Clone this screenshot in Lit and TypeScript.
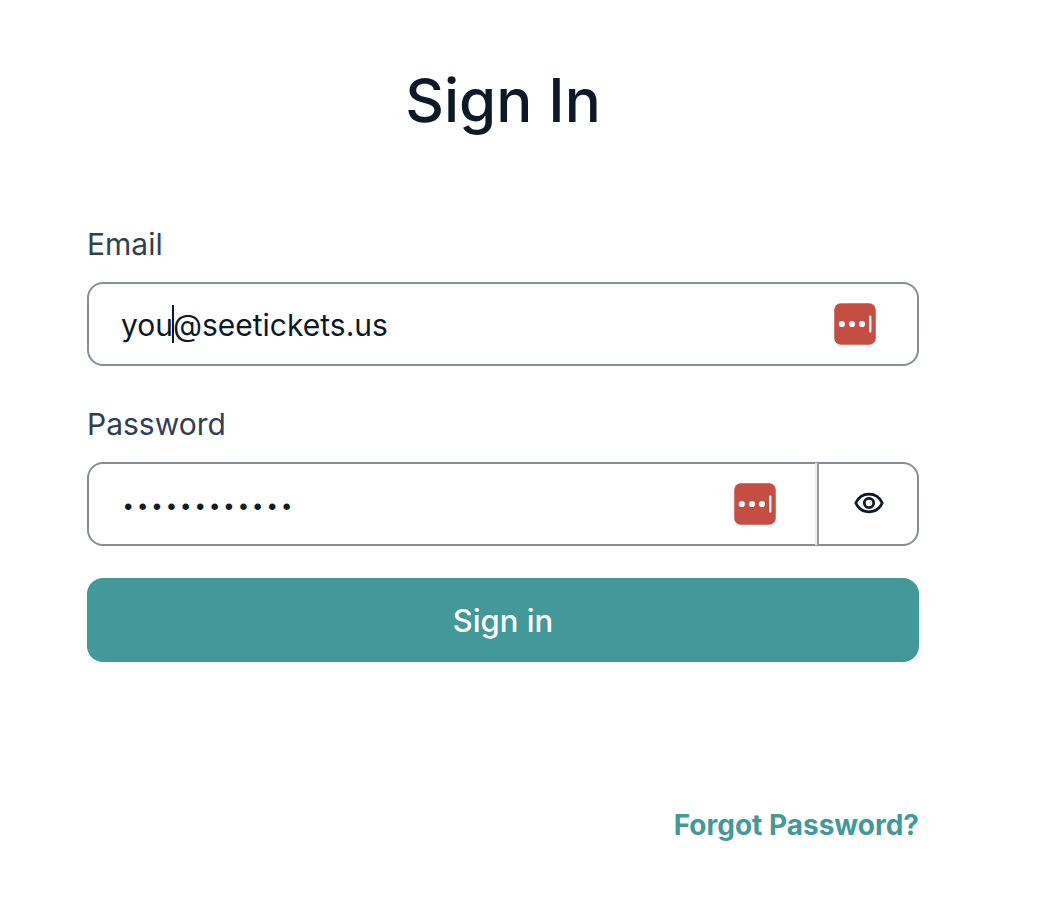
import { LitElement, html, css, svg } from "lit";
import { customElement, state } from "lit/decorators.js";

const managerIcon = html`
  <svg class="manager" viewBox="0 0 42 42" aria-hidden="true">
    <rect x="0.25" y="0.25" width="41.5" height="41.5" rx="6.5" fill="#c64d42" />
    ${[7.8, 18, 28].map((x) => svg`<circle cx=${x} cy="21" r="3.1" fill="#fff" />`)}
    <rect x="35.1" y="12.5" width="2.3" height="17" rx="1" fill="#fff" />
  </svg>
`;

@customElement("app-root")
export class AppRoot extends LitElement {
  static styles = css`
    :host {
      display: block;
      min-height: 100vh;
      box-sizing: border-box;
      padding: 60px 139px 60px 87px;
      background: #fff;
      color: #0d1926;
      font-family: Inter, "Liberation Sans", sans-serif;
      font-size: 30px;
      line-height: 48px;
    }
    * {
      box-sizing: border-box;
    }
    h1 {
      margin: 0 0 78px;
      font-size: 60px;
      line-height: 80px;
      font-weight: 500;
      text-align: center;
    }
    form {
      display: flex;
      flex-direction: column;
      gap: 32px;
    }
    .field {
      display: flex;
      flex-direction: column;
      gap: 14px;
    }
    label {
      align-self: flex-start;
      padding-top: 2px;
      color: #304050;
      line-height: 48px;
    }
    .box {
      position: relative;
      display: flex;
      align-items: center;
      height: 84px;
      border: 2px solid #868e9a;
      border-radius: 16px;
    }
    input {
      flex: 1;
      min-width: 0;
      height: 100%;
      padding: 2px 16px 0 32px;
      border: 0;
      outline: 0;
      background: transparent;
      color: inherit;
      font: inherit;
    }
    input[type="password"] {
      padding-top: 8px;
      font-family: "Liberation Mono", monospace;
      font-size: 24px;
    }
    .caret {
      position: absolute;
      left: 83px;
      top: 21px;
      width: 2px;
      height: 38px;
      background: #0d1926;
    }
    .manager {
      flex: none;
      width: 42px;
      height: 42px;
      margin-right: 41px;
    }
    .reveal {
      flex: none;
      width: 100px;
      height: 82px;
      display: flex;
      align-items: center;
      justify-content: center;
      padding: 0 0 2px 2px;
      border: 0;
      border-left: 2px solid #999;
      box-shadow: -2px 0 #eee;
      background: transparent;
      color: #0d1926;
    }
    .eye {
      width: 32px;
      height: 32px;
    }
    .submit {
      height: 84px;
      padding: 2px 0 0;
      border: 0;
      border-radius: 16px;
      background: #439899;
      color: #fff;
      font: inherit;
      font-size: 31px;
      font-weight: 500;
    }
    .links {
      display: flex;
      justify-content: flex-end;
      margin-top: 139px;
    }
    a {
      color: #439899;
      font-size: 28px;
      font-weight: 700;
      text-decoration: none;
    }
  `;

  @state() private revealed = false;

  private submit(e: Event) {
    e.preventDefault();
  }

  render() {
    return html`
      <h1>Sign In</h1>
      <form @submit=${this.submit}>
        <div class="field">
          <label for="email">Email</label>
          <div class="box">
            <input id="email" type="email" value="you@seetickets.us" spellcheck="false" />
            <span class="caret"></span>
            ${managerIcon}
          </div>
        </div>
        <div class="field">
          <label for="password">Password</label>
          <div class="box">
            <input id="password" type=${this.revealed ? "text" : "password"} value="abcdefghijkl" />
            ${managerIcon}
            <button
              class="reveal"
              type="button"
              aria-label="Show password"
              @click=${() => (this.revealed = !this.revealed)}
            >
              <svg class="eye" viewBox="0 0 32 32" fill="none" stroke="currentColor" stroke-width="2.8" aria-hidden="true">
                <path d="M2.8 16C5.5 10 10.5 7.2 16 7.2S26.5 10 29.2 16C26.5 22 21.5 24.8 16 24.8S5.5 22 2.8 16Z" stroke-linejoin="round" />
                <circle cx="16" cy="16" r="4.7" />
              </svg>
            </button>
          </div>
        </div>
        <button class="submit" type="submit">Sign in</button>
      </form>
      <div class="links"><a href="#forgot">Forgot Password?</a></div>
    `;
  }
}
